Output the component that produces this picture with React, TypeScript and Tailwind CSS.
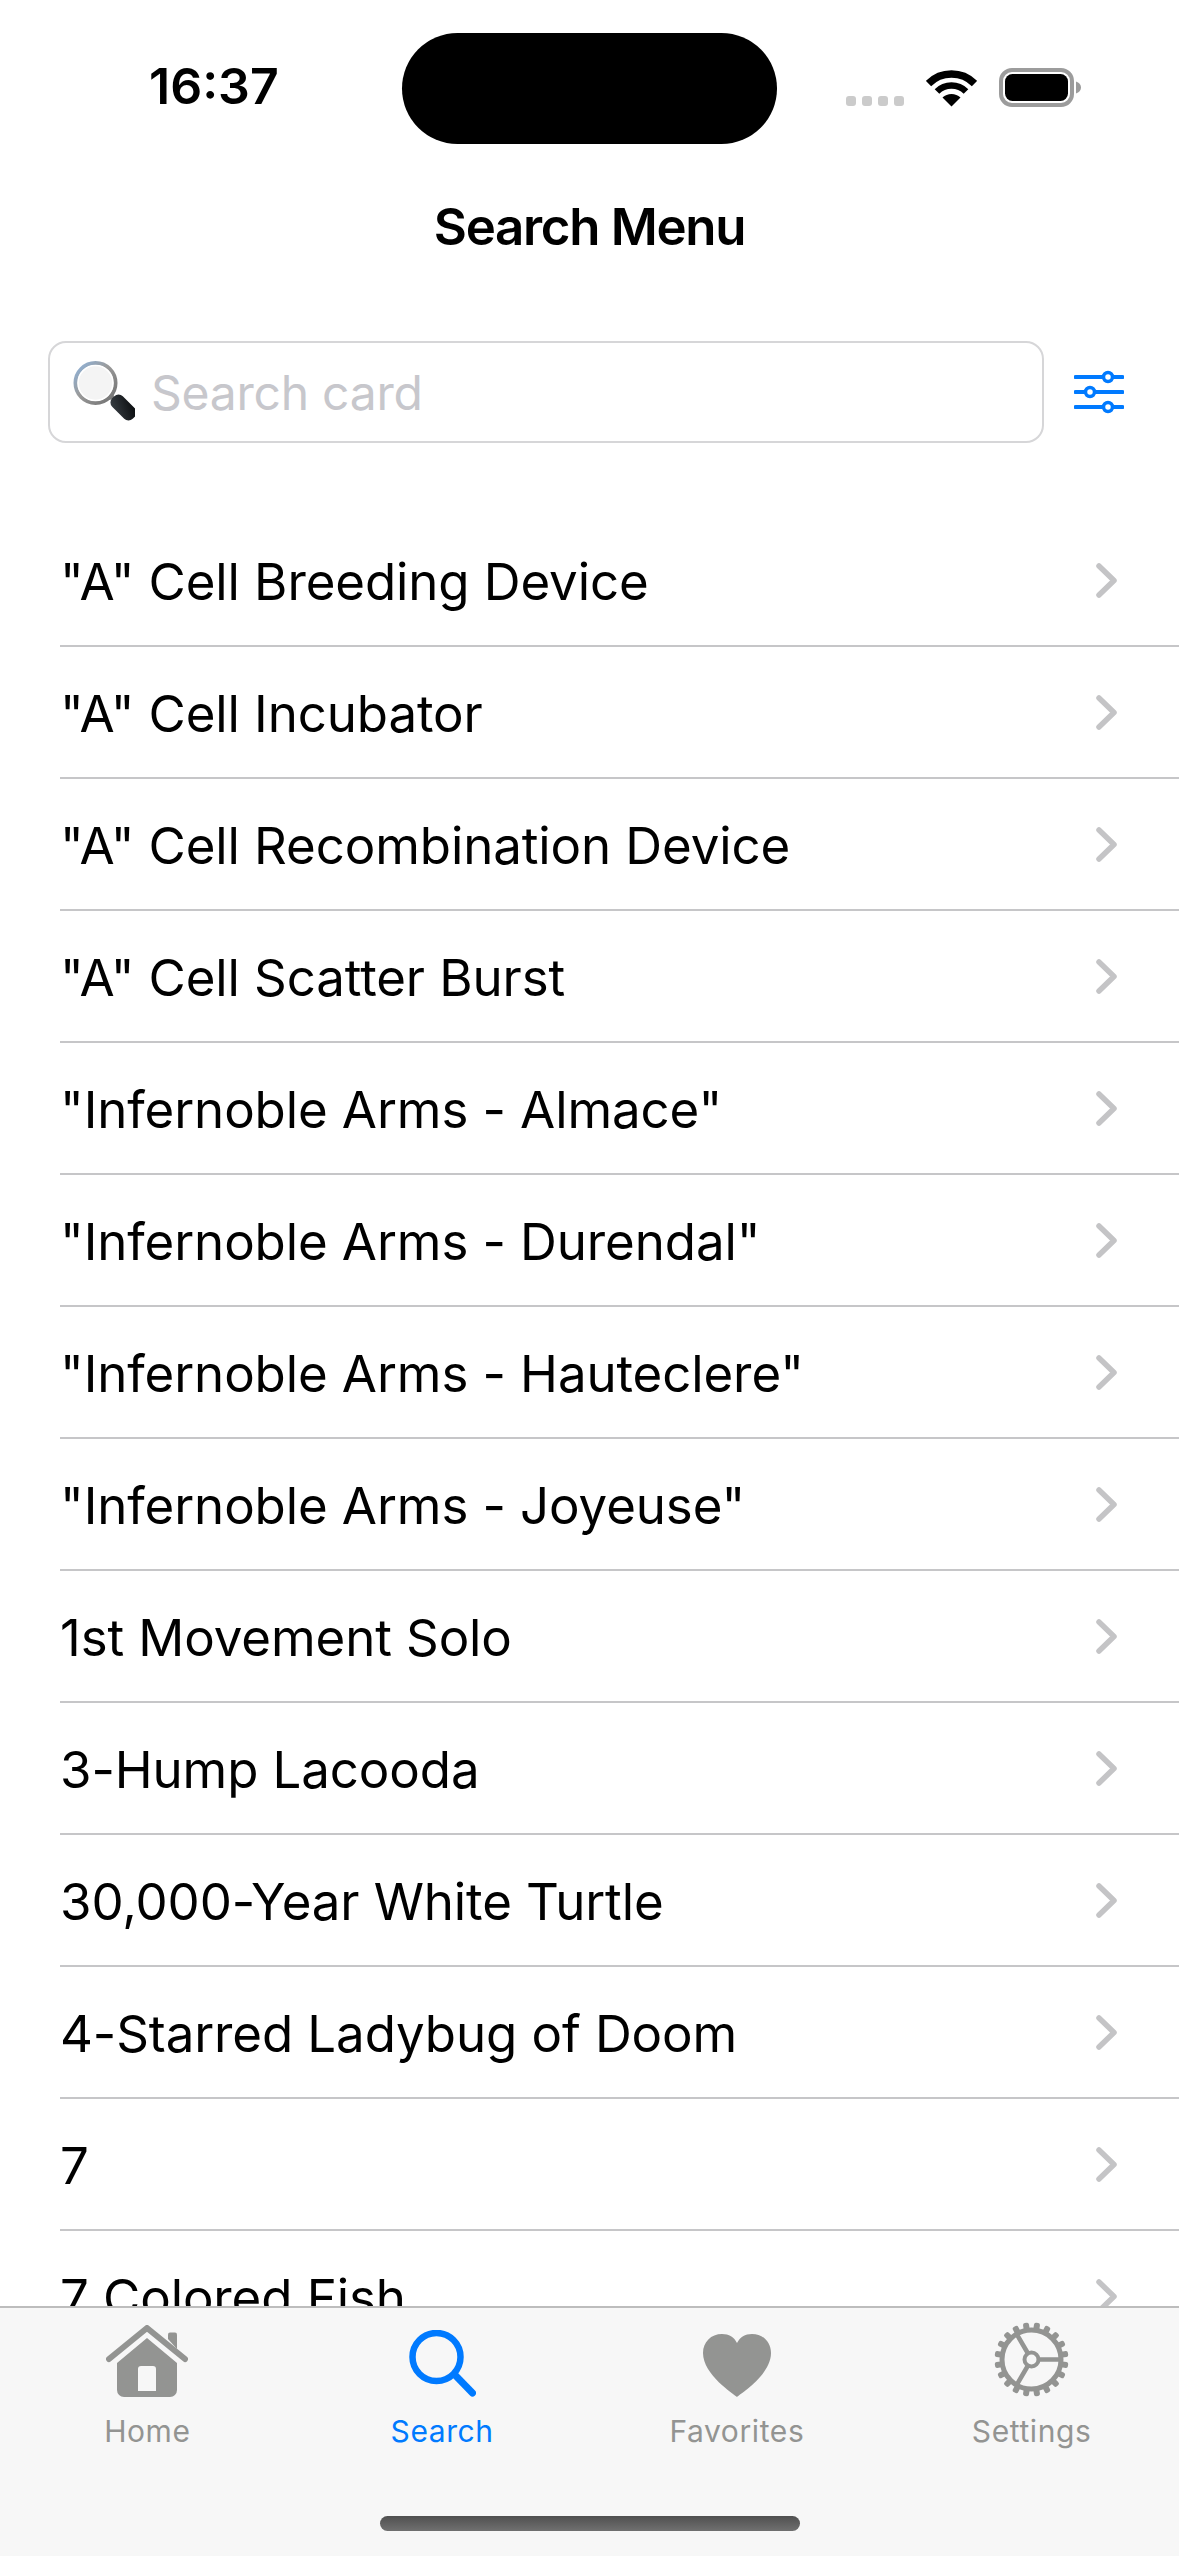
const cards = [
  '"A" Cell Breeding Device',
  '"A" Cell Incubator',
  '"A" Cell Recombination Device',
  '"A" Cell Scatter Burst',
  '"Infernoble Arms - Almace"',
  '"Infernoble Arms - Durendal"',
  '"Infernoble Arms - Hauteclere"',
  '"Infernoble Arms - Joyeuse"',
  "1st Movement Solo",
  "3-Hump Lacooda",
  "30,000-Year White Turtle",
  "4-Starred Ladybug of Doom",
  "7",
  "7 Colored Fish",
]

function Wifi() {
  return (
    <svg width="51" height="38" viewBox="0 0 51 38" fill="none" stroke="#000">
      <path d="M2.5 14.5A32.5 32.5 0 0 1 48.500 14.500" strokeWidth="7.500" />
      <path d="M11 22.500A20.500 20.500 0 0 1 40 22.500" strokeWidth="6.500" />
      <path d="M25.500 37.500L16.500 28.500A13 13 0 0 1 34.500 28.500Z" fill="#000" stroke="none" />
    </svg>
  )
}

function Battery() {
  return (
    <svg width="83" height="39" viewBox="0 0 83 39">
      <rect x="2" y="2" width="71" height="35" rx="11" fill="none" stroke="#9c9c9c" strokeWidth="4" />
      <rect x="6" y="6" width="63" height="27" rx="7.500" fill="#000" />
      <path d="M77 13.500C80 14.500 82 16.500 82 19.500C82 22.500 80 24.500 77 25.500Z" fill="#9c9c9c" />
    </svg>
  )
}

function Magnifier() {
  return (
    <svg width="62" height="62" viewBox="0 0 62 62" className="shrink-0">
      <defs>
        <linearGradient id="ring" x1="0" y1="0" x2="1" y2="1">
          <stop offset="0" stopColor="#8fb4dc" />
          <stop offset="0.45" stopColor="#9a9a9a" />
          <stop offset="1" stopColor="#6f6f6f" />
        </linearGradient>
        <linearGradient id="handle" x1="0" y1="0" x2="1" y2="1">
          <stop offset="0" stopColor="#3a4046" />
          <stop offset="1" stopColor="#06080a" />
        </linearGradient>
      </defs>
      <path d="M35 37L41 36" stroke="#777" strokeWidth="4" />
      <rect x="43" y="32" width="15" height="29" rx="6" fill="url(#handle)" transform="rotate(-45 50.500 46.500)" />
      <circle cx="22.500" cy="22" r="20" fill="#f4f4f4" stroke="url(#ring)" strokeWidth="4" />
      <circle cx="22.500" cy="22" r="17.500" fill="none" stroke="#fff" strokeWidth="1.500" />
    </svg>
  )
}

function Sliders() {
  return (
    <svg width="50" height="44" viewBox="0 0 50 44" fill="#fff" stroke="#007aff" className="shrink-0">
      <path d="M1.500 7H48.500M1.500 22H48.500M1.500 37H48.500" strokeWidth="4" strokeLinecap="round" />
      <circle cx="34" cy="7" r="4.500" strokeWidth="3.500" />
      <circle cx="16" cy="22" r="4.500" strokeWidth="3.500" />
      <circle cx="34" cy="37" r="4.500" strokeWidth="3.500" />
    </svg>
  )
}

function Chevron() {
  return (
    <svg width="21" height="35" viewBox="0 0 21 35" fill="none" stroke="#c4c4c6" strokeWidth="5.500" strokeLinecap="round" strokeLinejoin="round" className="shrink-0">
      <path d="M3 3L18 17.500L3 32" />
    </svg>
  )
}

function HomeIcon() {
  return (
    <svg width="82" height="72" viewBox="0 0 82 72">
      <path d="M3 34L41 3L79 34" fill="none" stroke="#939492" strokeWidth="6" strokeLinecap="round" strokeLinejoin="round" />
      <path d="M62 14V9.500A2 2 0 0 1 64 7.500H69A2 2 0 0 1 71 9.500V24Z" fill="#939492" />
      <path fillRule="evenodd" d="M41 13L71 38V65A7 7 0 0 1 64 72H18A7 7 0 0 1 11 65V38ZM35 41A3 3 0 0 0 32 44V66H50V44A3 3 0 0 0 47 41Z" fill="#939492" />
    </svg>
  )
}

function SearchIcon() {
  return (
    <svg width="67" height="67" viewBox="0 0 67 67" fill="none" stroke="#007aff">
      <circle cx="27.500" cy="27" r="24" strokeWidth="6.500" />
      <path d="M46 45L63.500 63" strokeWidth="7" strokeLinecap="round" />
    </svg>
  )
}

function HeartIcon() {
  return (
    <svg width="68" height="63" viewBox="0 0 68 63">
      <path d="M34 63C31 60 0 41 0 19C0 8 8 0 19 0C26 0 31 3 34 9C37 3 42 0 49 0C60 0 68 8 68 19C68 41 37 60 34 63Z" fill="#939492" />
    </svg>
  )
}

function GearIcon() {
  const teeth = Array.from({ length: 20 }, (_, i) => 9 + i * 18)
  return (
    <svg width="75" height="75" viewBox="0 0 75 75" fill="none" stroke="#939492">
      {teeth.map((a) => (
        <rect key={a} x="34.500" y="0.500" width="6" height="8" rx="2" fill="#939492" stroke="none" transform={`rotate(${a} 37.500 37.500)`} />
      ))}
      <circle cx="37.500" cy="37.500" r="29.500" strokeWidth="5" />
      <path d="M44 37.500H66M34 31.500L22 11M34 43.500L22 64" strokeWidth="4.500" />
      <circle cx="37.500" cy="37.500" r="7" strokeWidth="4" />
    </svg>
  )
}

function Tab({ label, active, icon }: { label: string; active?: boolean; icon: React.ReactNode }) {
  return (
    <div className="flex w-[295px] flex-col items-center">
      <div className="flex h-[76px] items-end">{icon}</div>
      <span className={`mt-[16px] text-[30px] leading-[36px] tracking-[0.6px] ${active ? "text-[#007aff]" : "text-[#939492]"}`}>
        {label}
      </span>
    </div>
  )
}

export default function App() {
  return (
    <div className="flex h-[2556px] w-[1179px] flex-col overflow-hidden bg-white font-[Inter,sans-serif] text-black">
      {/* status bar */}
      <div className="flex h-[176px] shrink-0">
        <span className="w-[402px] shrink-0 pl-[149px] pt-[56px] text-[50px] font-semibold leading-[60px]">16:37</span>
        <div className="mt-[33px] h-[111px] w-[375px] shrink-0 rounded-[56px] bg-black" />
        <div className="ml-[69px] mt-[68px] flex h-[39px] items-end">
          <div className="mb-[1px] flex gap-[6px]">
            <div className="h-[10px] w-[10px] rounded-[3px] bg-[#cbcbcb]" />
            <div className="h-[10px] w-[10px] rounded-[3px] bg-[#cbcbcb]" />
            <div className="h-[10px] w-[10px] rounded-[3px] bg-[#cbcbcb]" />
            <div className="h-[10px] w-[10px] rounded-[3px] bg-[#cbcbcb]" />
          </div>
          <div className="ml-[22px] mr-[22px]"><Wifi /></div>
          <Battery />
        </div>
      </div>

      <h1 className="flex h-[102px] shrink-0 items-center justify-center text-[51px] font-semibold tracking-[-1.3px]">Search Menu</h1>

      {/* search */}
      <div className="mt-[63px] flex shrink-0 items-center pl-[48px]">
        <div className="flex h-[102px] w-[996px] items-center rounded-[18px] border-2 border-[#d6d6d8] pl-[23px]">
          <Magnifier />
          <span className="ml-[16px] pt-[2px] text-[48px] tracking-[-0.25px] text-[#c7c7cc]">Search card</span>
        </div>
        <div className="ml-[30px]"><Sliders /></div>
      </div>

      {/* card list */}
      <div className="mt-[72px] min-h-0 flex-1 overflow-hidden pl-[60px]">
        {cards.map((name) => (
          <div key={name} className="flex h-[132px] items-center justify-between border-b-2 border-[#c6c6c8] pr-[62px]">
            <span className="pt-[3px] text-[51px] leading-[60px] tracking-[-0.1px]">{name}</span>
            <Chevron />
          </div>
        ))}
      </div>

      {/* tab bar */}
      <div className="flex h-[250px] shrink-0 flex-col items-center border-t-2 border-[#bdbdbd] bg-[#f7f7f7]">
        <div className="flex h-[208px] w-full items-start pt-[13px]">
          <Tab label="Home" icon={<HomeIcon />} />
          <Tab label="Search" active icon={<SearchIcon />} />
          <Tab label="Favorites" icon={<HeartIcon />} />
          <Tab label="Settings" icon={<GearIcon />} />
        </div>
        <div className="h-[15px] w-[420px] rounded-[8px] bg-gradient-to-b from-[#505050] to-[#707070]" />
      </div>
    </div>
  )
}
